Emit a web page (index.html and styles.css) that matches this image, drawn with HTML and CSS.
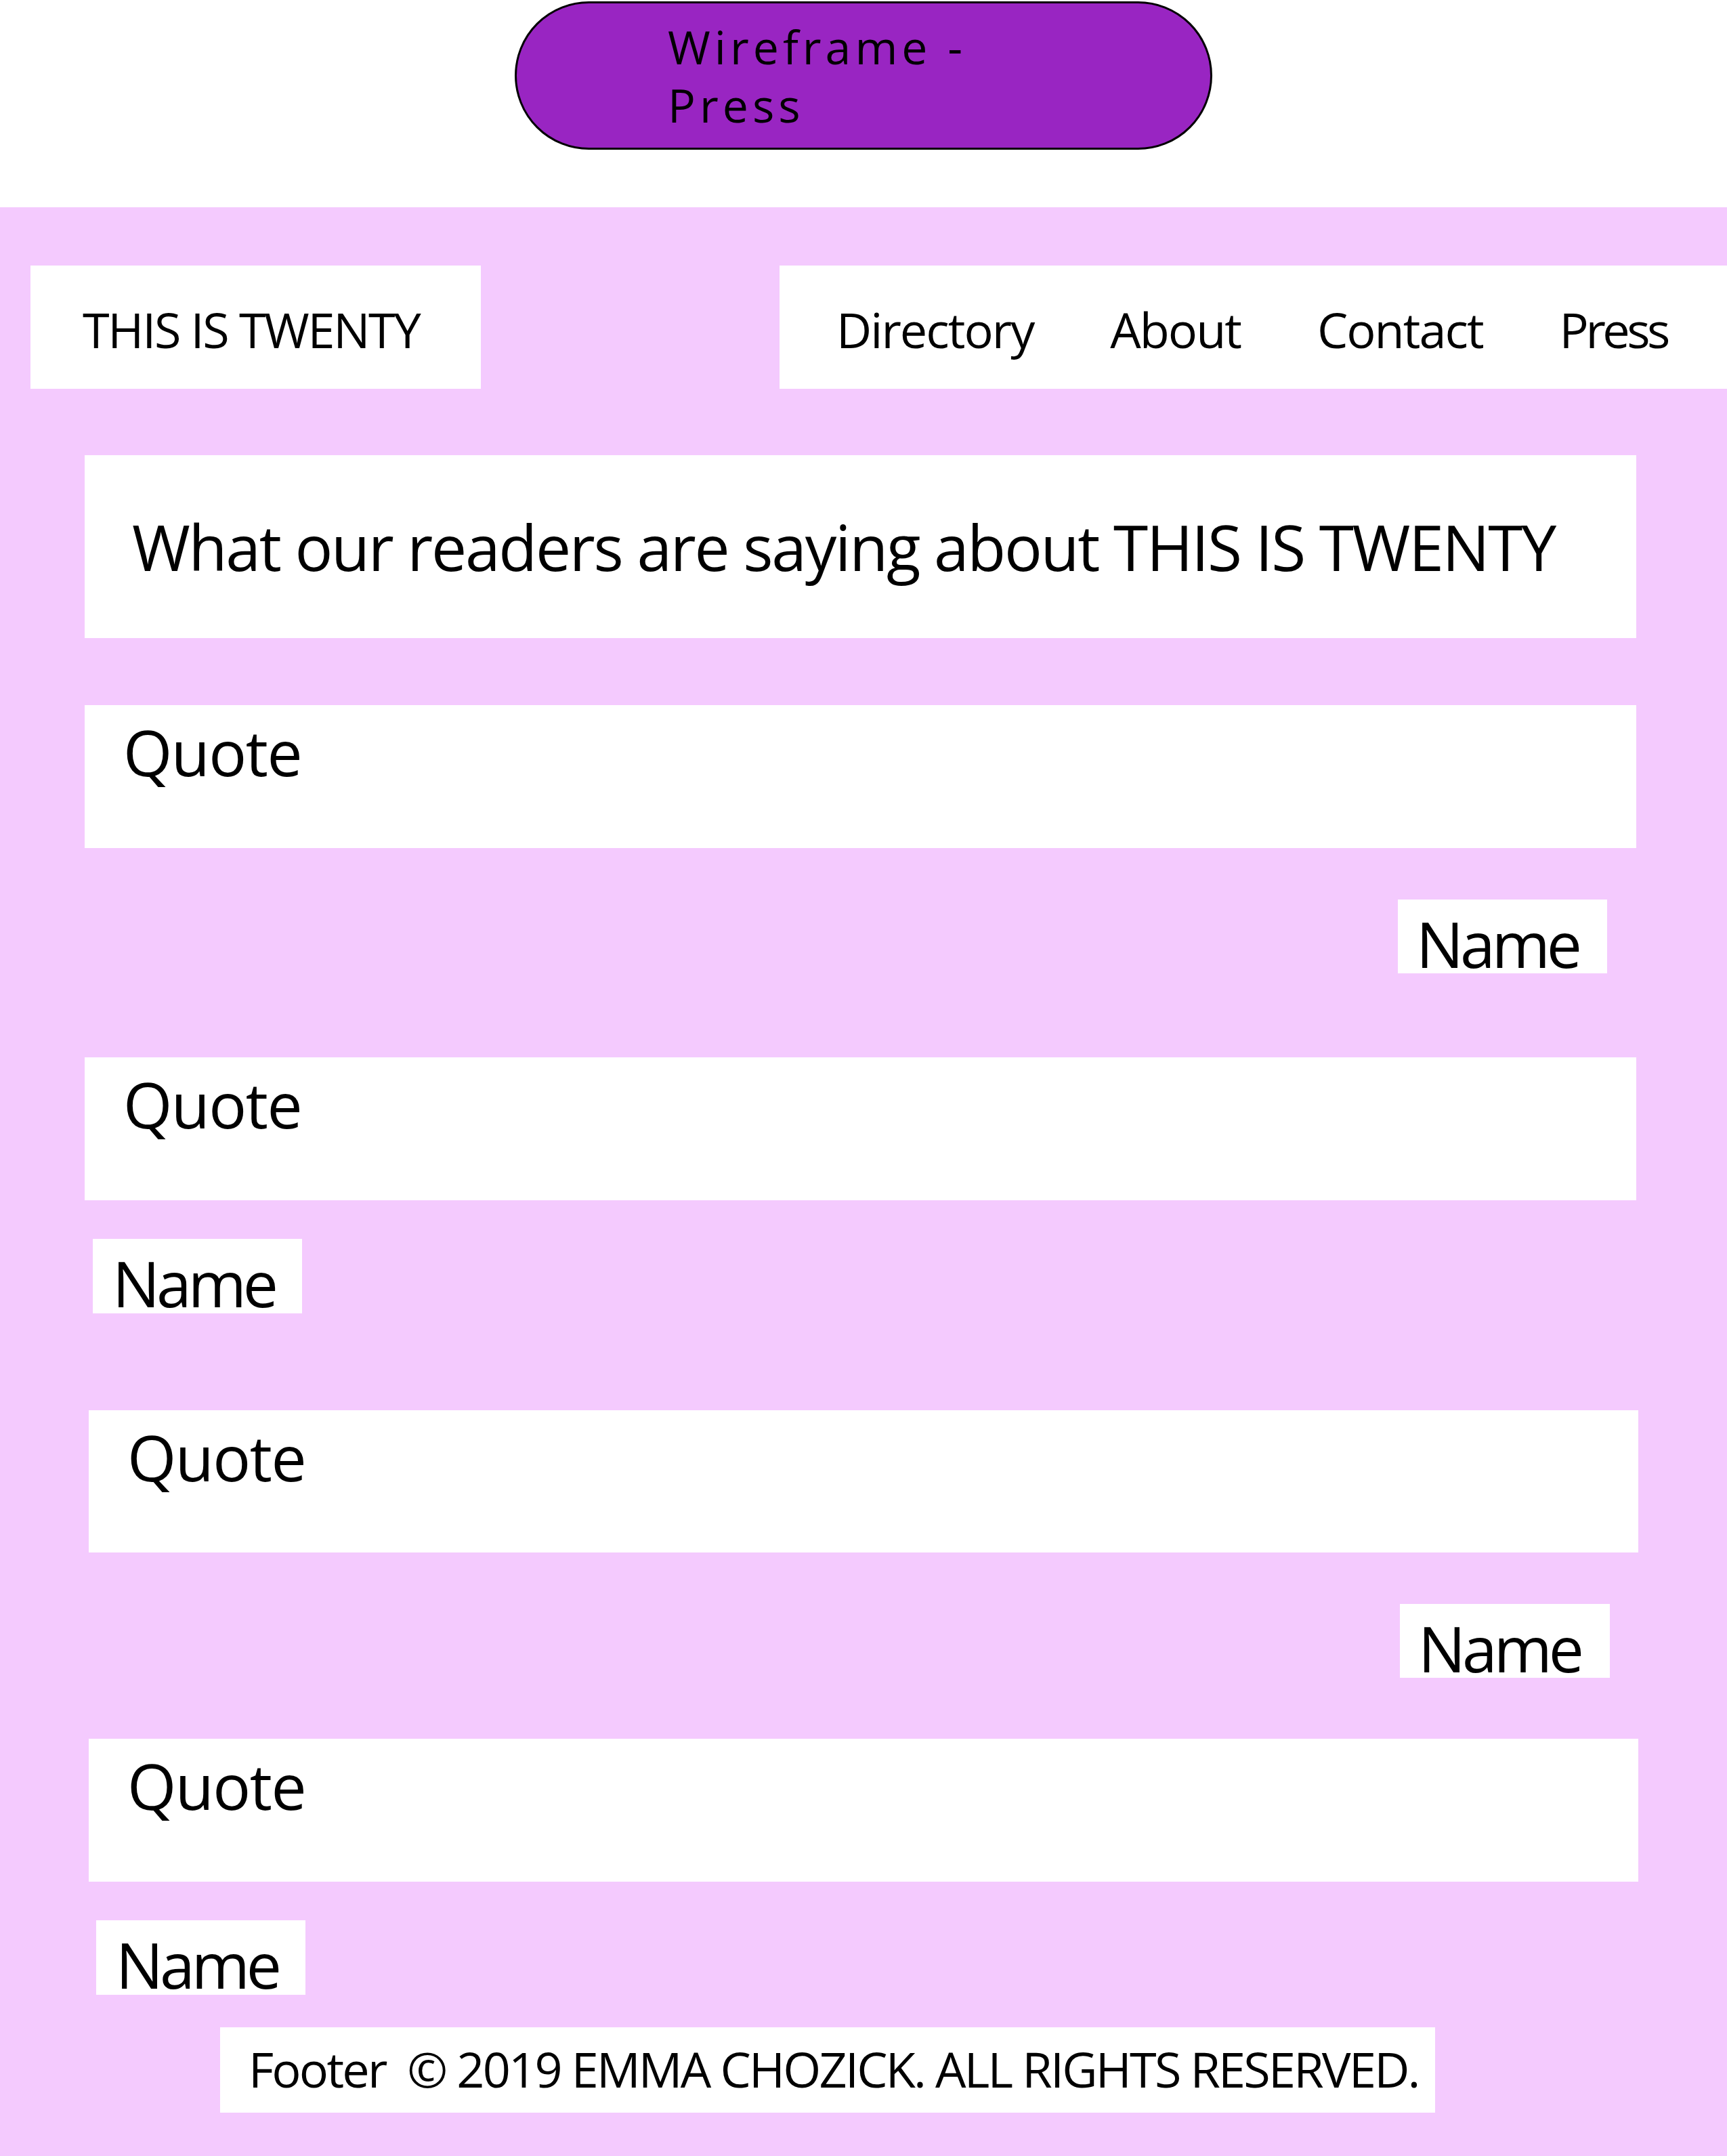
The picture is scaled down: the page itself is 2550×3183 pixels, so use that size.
FILE: index.html
```html
<!DOCTYPE html>
<html lang="en">
<head>
<meta charset="utf-8">
<title>Wireframe - Press</title>
<link rel="stylesheet" href="styles.css">
</head>
<body>
<header class="top">
  <div class="pill"><div class="pill-text">Wireframe - Press</div></div>
</header>
<main class="page">
  <div class="bar">
    <div class="logo">THIS IS TWENTY</div>
    <nav class="nav">
      <span class="nav-item">Directory</span>
      <span class="nav-item">About</span>
      <span class="nav-item">Contact</span>
      <span class="nav-item nav-item-tight">Press</span>
    </nav>
  </div>
  <h1 class="heading">What our readers are saying about THIS IS TWENTY</h1>

  <div class="quote q1">Quote</div>
  <div class="name name-right n1">Name</div>

  <div class="quote q2">Quote</div>
  <div class="name name-left n2">Name</div>

  <div class="quote quote-shift q3">Quote</div>
  <div class="name name-right n3">Name</div>

  <div class="quote quote-shift q4">Quote</div>
  <div class="name name-left n4">Name</div>

  <footer class="footer">Footer&nbsp; © 2019 EMMA CHOZICK. ALL RIGHTS RESERVED.</footer>
</main>
</body>
</html>
```

FILE: styles.css
```css
html, body {
  margin: 0;
  padding: 0;
}

body {
  width: 2550px;
  font-family: "Open Sans", "Noto Sans", "Liberation Sans", sans-serif;
  color: #000;
  background: #fff;
}

.top {
  height: 306px;
  box-sizing: border-box;
  padding-top: 2px;
  display: flex;
  justify-content: center;
  align-items: flex-start;
}

.pill {
  width: 1030px;
  height: 219px;
  box-sizing: border-box;
  border: 3px solid #000;
  border-radius: 110px;
  background: #9925c2;
  padding: 21px 0 0 223px;
}

.pill-text {
  width: 520px;
  font-size: 68px;
  line-height: 86px;
  letter-spacing: 6px;
}

.page {
  background: #f4cafe;
  height: 2877px;
  box-sizing: border-box;
  padding-top: 86px;
  display: flex;
  flex-direction: column;
  align-items: flex-start;
}

.bar {
  align-self: stretch;
  display: flex;
  justify-content: space-between;
  height: 182px;
}

.logo {
  margin-left: 45px;
  width: 665px;
  height: 182px;
  box-sizing: border-box;
  background: #fff;
  padding: 58px 0 0 77px;
  font-size: 72px;
  line-height: 72px;
  letter-spacing: -2.3px;
  white-space: nowrap;
}

.nav {
  width: 1399px;
  height: 182px;
  box-sizing: border-box;
  background: #fff;
  padding: 58px 0 0 84px;
  display: flex;
  gap: 113px;
  font-size: 72px;
  line-height: 72px;
  letter-spacing: -2px;
}

.nav-item-tight {
  letter-spacing: -4.5px;
}

.heading {
  margin: 98px 0 0 125px;
  width: 2291px;
  height: 270px;
  box-sizing: border-box;
  background: #fff;
  padding: 89px 0 0 70px;
  font-size: 93px;
  line-height: 93px;
  font-weight: 400;
  letter-spacing: -2.3px;
  white-space: nowrap;
}

.quote {
  margin-left: 125px;
  width: 2291px;
  height: 211px;
  box-sizing: border-box;
  background: #fff;
  padding: 23px 0 0 57px;
  font-size: 93px;
  line-height: 93px;
  letter-spacing: -1.5px;
}

.quote-shift {
  margin-left: 131px;
  width: 2288px;
}

.name {
  width: 309px;
  height: 109px;
  box-sizing: border-box;
  background: #fff;
  padding: 19px 0 0 27px;
  font-size: 93px;
  line-height: 93px;
  letter-spacing: -5px;
}

.name-right {
  margin-left: auto;
}

.name-left {
  padding-left: 29px;
}

.q1 { margin-top: 99px; }
.n1 { margin-top: 76px; margin-right: 177px; }
.q2 { margin-top: 124px; }
.n2 { margin-top: 57px; margin-left: 137px; height: 110px; }
.q3 { margin-top: 143px; height: 210px; }
.n3 { margin-top: 76px; margin-right: 173px; width: 310px; }
.q4 { margin-top: 90px; }
.n4 { margin-top: 57px; margin-left: 142px; height: 110px; }

.footer {
  margin: 48px 0 0 325px;
  width: 1794px;
  height: 126px;
  box-sizing: border-box;
  background: #fff;
  padding: 25px 0 0 42px;
  font-size: 72px;
  line-height: 72px;
  letter-spacing: -2.8px;
  white-space: nowrap;
}
```
